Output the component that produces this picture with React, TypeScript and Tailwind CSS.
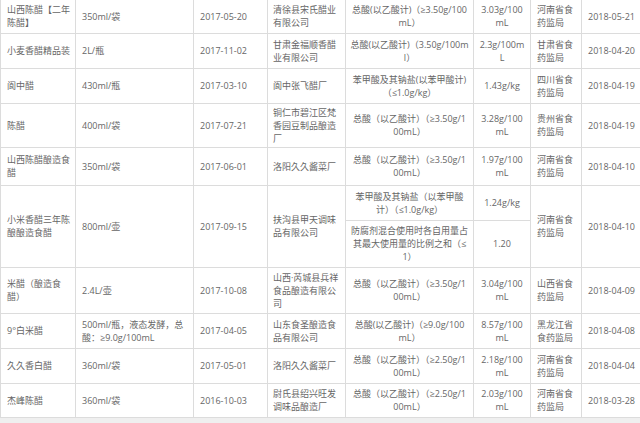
import React from 'react';

type Row = {
  name: string[];
  spec: string[];
  date: string;
  maker: string[];
  items: { item: string[]; value: string[]; h?: number }[];
  agency: string[];
  checked: string;
  h: number;
};

const rows: Row[] = [
  {
    name: ['山西陈醋【二年', '陈醋】'],
    spec: ['350ml/袋'],
    date: '2017-05-20',
    maker: ['清徐县宋氏醋业', '有限公司'],
    items: [{ item: ['总酸(以乙酸计)（≥3.50g/100', 'mL）'], value: ['3.03g/100', 'mL'] }],
    agency: ['河南省食', '药监局'],
    checked: '2018-05-21',
    h: 33,
  },
  {
    name: ['小麦香醋精品装'],
    spec: ['2L/瓶'],
    date: '2017-11-02',
    maker: ['甘肃金福顺香醋', '业有限公司'],
    items: [{ item: ['总酸(以乙酸计)（3.50g/100m', 'l）'], value: ['2.3g/100m', 'L'] }],
    agency: ['甘肃省食', '药监局'],
    checked: '2018-04-20',
    h: 35,
  },
  {
    name: ['阆中醋'],
    spec: ['430ml/瓶'],
    date: '2017-03-10',
    maker: ['阆中张飞醋厂'],
    items: [{ item: ['苯甲酸及其钠盐(以苯甲酸计)', '（≤1.0g/kg）'], value: ['1.43g/kg'] }],
    agency: ['四川省食', '药监局'],
    checked: '2018-04-19',
    h: 35,
  },
  {
    name: ['陈醋'],
    spec: ['400ml/袋'],
    date: '2017-07-21',
    maker: ['铜仁市碧江区梵', '香园豆制品酿造', '厂'],
    items: [{ item: ['总酸（以乙酸计）（≥3.50g/1', '00mL）'], value: ['3.28g/100', 'mL'] }],
    agency: ['贵州省食', '药监局'],
    checked: '2018-04-19',
    h: 44,
  },
  {
    name: ['山西陈醋酿造食', '醋'],
    spec: ['350ml/袋'],
    date: '2017-06-01',
    maker: ['洛阳久久酱菜厂'],
    items: [{ item: ['总酸（以乙酸计）（≥3.50g/1', '00mL）'], value: ['1.97g/100', 'mL'] }],
    agency: ['河南省食', '药监局'],
    checked: '2018-04-10',
    h: 38,
  },
  {
    name: ['小米香醋三年陈', '酿酿造食醋'],
    spec: ['800ml/壶'],
    date: '2017-09-15',
    maker: ['扶沟县甲天调味', '品有限公司'],
    items: [
      { item: ['苯甲酸及其钠盐（以苯甲酸', '计）（≤1.0g/kg）'], value: ['1.24g/kg'], h: 35 },
      { item: ['防腐剂混合使用时各自用量占', '其最大使用量的比例之和（≤', '1）'], value: ['1.20'], h: 47 },
    ],
    agency: ['河南省食', '药监局'],
    checked: '2018-04-10',
    h: 82,
  },
  {
    name: ['米醋（酿造食', '醋）'],
    spec: ['2.4L/壶'],
    date: '2017-10-08',
    maker: ['山西·芮城县兵祥', '食品酿造有限公', '司'],
    items: [{ item: ['总酸（以乙酸计）（≥3.50g/1', '00mL）'], value: ['3.04g/100', 'mL'] }],
    agency: ['山西省食', '药监局'],
    checked: '2018-04-09',
    h: 46,
  },
  {
    name: ['9°白米醋'],
    spec: ['500ml/瓶，液态发酵，总', '酸：≥9.0g/100mL'],
    date: '2017-04-05',
    maker: ['山东食圣酿造食', '品有限公司'],
    items: [{ item: ['总酸(以乙酸计)（≥9.0g/100', 'mL）'], value: ['8.57g/100', 'mL'] }],
    agency: ['黑龙江省', '食药监局'],
    checked: '2018-04-08',
    h: 35,
  },
  {
    name: ['久久香白醋'],
    spec: ['360ml/袋'],
    date: '2017-05-01',
    maker: ['洛阳久久酱菜厂'],
    items: [{ item: ['总酸（以乙酸计）（≥2.50g/1', '00mL）'], value: ['2.18g/100', 'mL'] }],
    agency: ['河南省食', '药监局'],
    checked: '2018-04-04',
    h: 35,
  },
  {
    name: ['杰峰陈醋'],
    spec: ['360ml/袋'],
    date: '2016-10-03',
    maker: ['尉氏县绍兴旺发', '调味品酿造厂'],
    items: [{ item: ['总酸（以乙酸计）（≥2.50g/1', '00mL）'], value: ['2.03g/100', 'mL'] }],
    agency: ['河南省食', '药监局'],
    checked: '2018-03-28',
    h: 34,
  },
];

function Lines({ lines }: { lines: string[] }) {
  return (
    <>
      {lines.map((l, i) => (
        <div key={i} className="whitespace-nowrap">
          {l}
        </div>
      ))}
    </>
  );
}

const td = 'border border-[#dcdcdc] align-middle overflow-visible';
const left = `${td} pl-[6px] text-left`;
const center = `${td} text-center`;

export default function App() {
  return (
    <div
      className="w-[640px] h-[423px] overflow-hidden bg-white text-[#666] text-[9px] leading-[13px]"
      style={{ fontFamily: '"Open Sans", "Noto Sans CJK SC", sans-serif' }}
    >
      <table className="table-fixed border-collapse w-[640px] border-t-0">
        <colgroup>
          <col className="w-[75px]" />
          <col className="w-[118px]" />
          <col className="w-[74px]" />
          <col className="w-[78px]" />
          <col className="w-[128px]" />
          <col className="w-[57px]" />
          <col className="w-[51px]" />
          <col className="w-[59px]" />
        </colgroup>
        <tbody>
          {rows.map((r, ri) => {
            const span = r.items.length;
            const first = r.items[0];
            const cellTop = ri === 0 ? ' border-t-0' : '';
            return (
              <React.Fragment key={ri}>
                <tr style={{ height: first.h ?? r.h }}>
                  <td rowSpan={span} className={left + cellTop}>
                    <Lines lines={r.name} />
                  </td>
                  <td rowSpan={span} className={left + cellTop}>
                    <Lines lines={r.spec} />
                  </td>
                  <td rowSpan={span} className={left + cellTop}>
                    {r.date}
                  </td>
                  <td rowSpan={span} className={`${td} pl-[5px] text-left${cellTop}`}>
                    <Lines lines={r.maker} />
                  </td>
                  <td className={center + cellTop}>
                    <Lines lines={first.item} />
                  </td>
                  <td className={center + cellTop}>
                    <Lines lines={first.value} />
                  </td>
                  <td rowSpan={span} className={left + cellTop}>
                    <Lines lines={r.agency} />
                  </td>
                  <td rowSpan={span} className={left + cellTop}>
                    {r.checked}
                  </td>
                </tr>
                {r.items.slice(1).map((it, ii) => (
                  <tr key={ii} style={{ height: it.h }}>
                    <td className={center}>
                      <Lines lines={it.item} />
                    </td>
                    <td className={center}>
                      <Lines lines={it.value} />
                    </td>
                  </tr>
                ))}
              </React.Fragment>
            );
          })}
        </tbody>
      </table>
      <div className="h-[6px] bg-[#efefef]" />
    </div>
  );
}
